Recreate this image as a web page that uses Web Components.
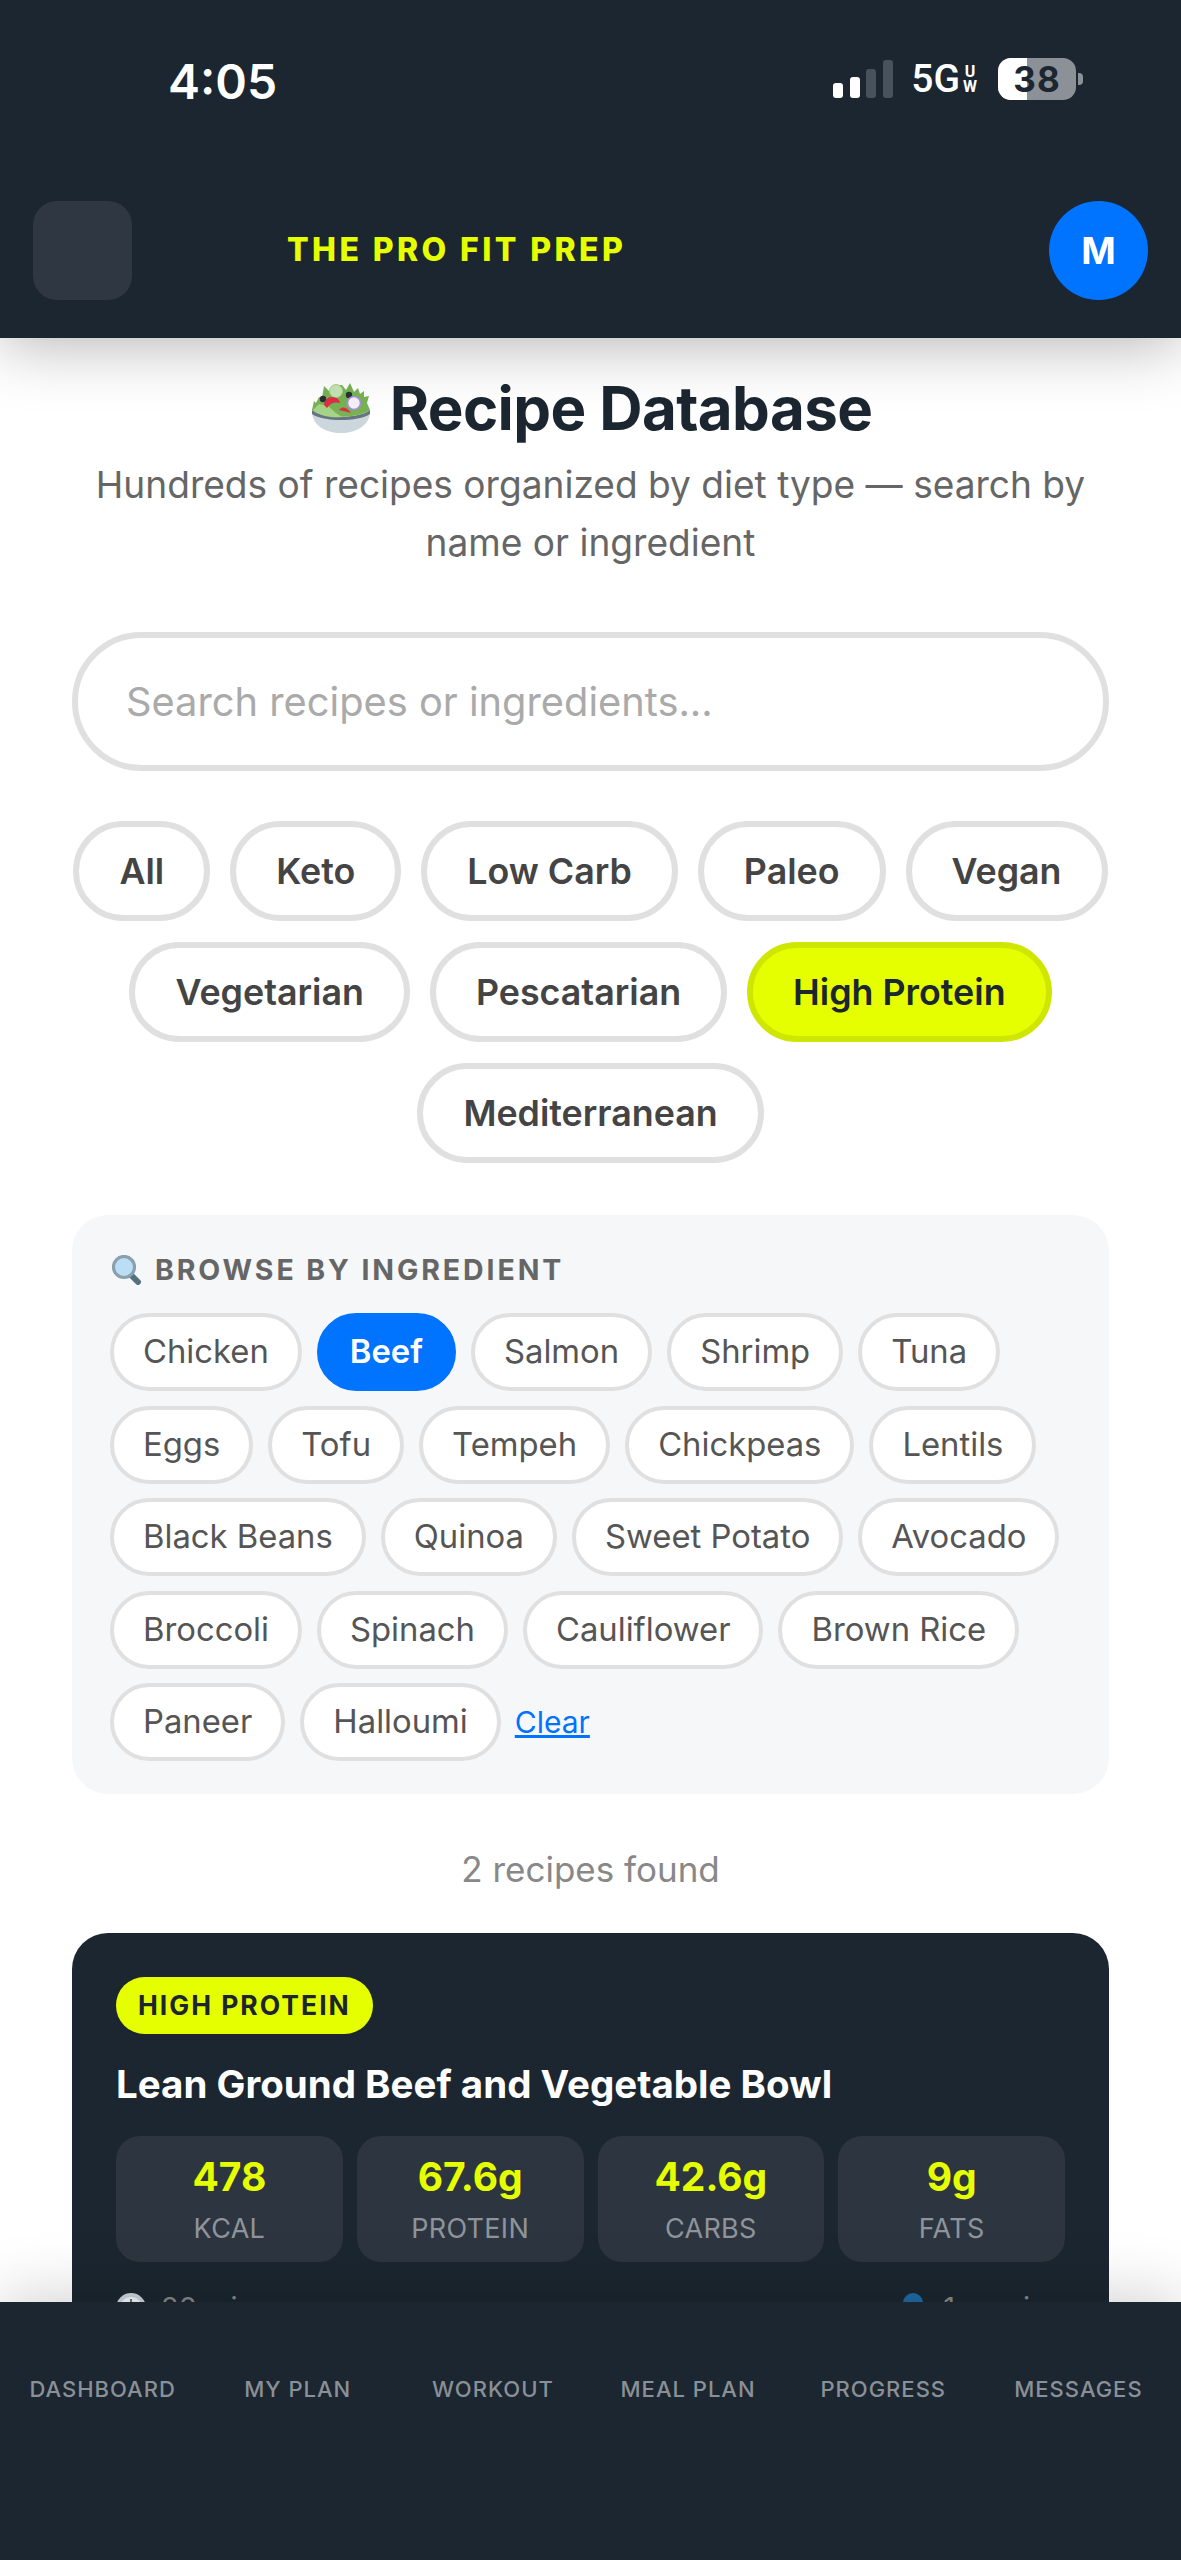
<!DOCTYPE html>
<html lang="en">
<head>
<meta charset="utf-8">
<title>Recipe Database</title>
<style>
    html, body { margin: 0; height: 2560px; overflow: hidden; background: #fff; font-family: Inter, sans-serif; }
</style>
</head>
<body>
<app-shell>
    <status-bar slot="top"></status-bar>
    <top-bar slot="top" initial="M">THE PRO FIT PREP</top-bar>

    <page-title sub="Hundreds of recipes organized by diet type — search by name or ingredient">Recipe Database</page-title>
    <search-box placeholder="Search recipes or ingredients..."></search-box>

    <diet-filters>
        <diet-pill>All</diet-pill>
        <diet-pill>Keto</diet-pill>
        <diet-pill>Low Carb</diet-pill>
        <diet-pill>Paleo</diet-pill>
        <diet-pill>Vegan</diet-pill>
        <diet-pill>Vegetarian</diet-pill>
        <diet-pill>Pescatarian</diet-pill>
        <diet-pill active>High Protein</diet-pill>
        <diet-pill>Mediterranean</diet-pill>
    </diet-filters>

    <ingredient-panel>
        <ingredient-chip>Chicken</ingredient-chip>
        <ingredient-chip active>Beef</ingredient-chip>
        <ingredient-chip>Salmon</ingredient-chip>
        <ingredient-chip>Shrimp</ingredient-chip>
        <ingredient-chip>Tuna</ingredient-chip>
        <ingredient-chip>Eggs</ingredient-chip>
        <ingredient-chip>Tofu</ingredient-chip>
        <ingredient-chip>Tempeh</ingredient-chip>
        <ingredient-chip>Chickpeas</ingredient-chip>
        <ingredient-chip>Lentils</ingredient-chip>
        <ingredient-chip>Black Beans</ingredient-chip>
        <ingredient-chip>Quinoa</ingredient-chip>
        <ingredient-chip>Sweet Potato</ingredient-chip>
        <ingredient-chip>Avocado</ingredient-chip>
        <ingredient-chip>Broccoli</ingredient-chip>
        <ingredient-chip>Spinach</ingredient-chip>
        <ingredient-chip>Cauliflower</ingredient-chip>
        <ingredient-chip>Brown Rice</ingredient-chip>
        <ingredient-chip>Paneer</ingredient-chip>
        <ingredient-chip>Halloumi</ingredient-chip>
    </ingredient-panel>

    <result-count>2 recipes found</result-count>

    <recipe-card tag="HIGH PROTEIN" name="Lean Ground Beef and Vegetable Bowl" time="20 min" serves="1 serving">
        <macro-box value="478">KCAL</macro-box>
        <macro-box value="67.6g">PROTEIN</macro-box>
        <macro-box value="42.6g">CARBS</macro-box>
        <macro-box value="9g">FATS</macro-box>
    </recipe-card>

    <bottom-nav slot="bottom">
        <span>DASHBOARD</span>
        <span>MY PLAN</span>
        <span>WORKOUT</span>
        <span>MEAL PLAN</span>
        <span>PROGRESS</span>
        <span>MESSAGES</span>
    </bottom-nav>
</app-shell>

<script>
// small helper so every element below reads the same way
function define(name, css, html, setup) {
    const template = document.createElement('template');
    template.innerHTML = `<style>${css}</style>${html}`;
    customElements.define(name, class extends HTMLElement {
        constructor() {
            super();
            this.attachShadow({mode: 'open'});
            this.shadowRoot.appendChild(template.content.cloneNode(true));
        }
        connectedCallback() {
            if (setup) setup(this, this.shadowRoot);
        }
    });
}

define('app-shell', `
    :host { display: flex; flex-direction: column; width: 1181px; height: 2560px; overflow: hidden; }
    .top { flex: none; background: #1b2630; box-shadow: 0 6px 60px rgba(0,0,0,.3); position: relative; z-index: 2; }
    .scroll { flex: 1; min-height: 0; overflow: hidden; padding: 0 72px; display: flex; flex-direction: column; }
    .bottom { flex: none; position: relative; z-index: 2; }
`, `
    <div class="top"><slot name="top"></slot></div>
    <div class="scroll"><slot></slot></div>
    <div class="bottom"><slot name="bottom"></slot></div>
`);

define('status-bar', `
    :host { display: flex; align-items: flex-start; justify-content: space-between; height: 201px; box-sizing: border-box; padding: 50px 98px 0 168px; color: #fff; }
    .time { font: 600 48px/64px Inter, sans-serif; }
    .right { display: flex; align-items: center; margin-top: 8px; height: 42px; }
    .net { display: flex; align-items: center; font: 500 39px/42px Roboto, sans-serif; margin: 0 21px 0 18px; }
    .uw { display: flex; flex-direction: column; font: 700 16px/15px Roboto, sans-serif; margin-left: 3px; text-align: center; }
    .batt { position: relative; width: 78px; height: 42px; border-radius: 13px; background: #8c9197; overflow: hidden; color: #1b2630; font: 700 35px/42px Inter, sans-serif; letter-spacing: 1px; text-align: center; }
    .batt i { position: absolute; inset: 0 49px 0 0; background: #fff; }
    .batt span { position: relative; }
    .nub { width: 5px; height: 12px; margin-left: 2px; background: #8c9197; border-radius: 0 4px 4px 0; }
`, `
    <div class="time">4:05</div>
    <div class="right">
        <svg width="60" height="38" viewBox="0 0 60 38">
            <rect x="0" y="23" width="10" height="15" rx="3" fill="#fff"/>
            <rect x="17" y="17" width="10" height="21" rx="3" fill="#fff"/>
            <rect x="33" y="9" width="10" height="29" rx="3" fill="#48525c"/>
            <rect x="50" y="0" width="10" height="38" rx="3" fill="#48525c"/>
        </svg>
        <div class="net">5G<div class="uw"><span>U</span><span>W</span></div></div>
        <div class="batt"><i></i><span>38</span></div>
        <div class="nub"></div>
    </div>
`);

define('top-bar', `
    :host { display: flex; align-items: center; height: 137px; box-sizing: border-box; padding: 0 33px 38px 33px; }
    .menu { width: 99px; height: 99px; border-radius: 24px; background: #2f3842; flex: none; }
    .brand { flex: 1; margin-left: 155px; margin-top: -2px; color: #e6ff00; font: 800 32px/1 Inter, sans-serif; letter-spacing: 3.4px; }
    .avatar { width: 99px; height: 99px; border-radius: 50%; background: #0073ff; color: #fff; font: 700 37px/99px Inter, sans-serif; text-align: center; flex: none; }
`, `
    <div class="menu"></div>
    <div class="brand"><slot></slot></div>
    <div class="avatar"></div>
`, (el, root) => {
    root.querySelector('.avatar').textContent = el.getAttribute('initial');
});

define('page-title', `
    :host { display: block; text-align: center; padding-top: 34px; }
    h1 { display: flex; align-items: center; justify-content: center; gap: 20px; margin: 0; padding-left: 3px; color: #1b2630; font: 700 60px/72px Inter, sans-serif; letter-spacing: -.6px; }
    svg { flex: none; }
    p { margin: 12px 0 0; color: #666; font: 400 37.1px/58px Inter, sans-serif; }
`, `
    <h1>
        <svg width="58" height="50" viewBox="0 0 58 50">
            <path d="M0 30 C12 38 46 38 58 30 C57 42 45 50 29 50 C13 50 1 42 0 30 Z" fill="#ccd6dd"/>
            <path d="M0 27 C10 36 48 36 58 27 L58 31 C46 39 12 39 0 31 Z" fill="#66757f"/>
            <path d="M0 27 L2 18 L4 20 L7 14 L10 15 L12 3 L18 9 L22 2 L30 2 L34 7 L38 0 L42 9 L46 5 L48 11 L52 8 L52 14 L57 13 L55 20 L58 27 C48 36 10 36 0 27 Z" fill="#77b255"/>
            <path d="M1 27 L7 21 L16 23 L24 30 L30 34 C18 35 8 33 1 27 Z" fill="#a6d388"/>
            <circle cx="24" cy="8" r="6.5" fill="#c6e5b3" stroke="#a6d388" stroke-width="1"/>
            <circle cx="11" cy="16" r="3.2" fill="#292f33"/><circle cx="37" cy="12" r="3.2" fill="#292f33"/>
            <path d="M12 22 Q13 14 20 14 Q27 14 28 20 Q20 18 15 25 Z" fill="#dd2e44"/>
            <path d="M27 27 Q32 21 39 30 Q32 28 27 27 Z" fill="#dd2e44"/>
            <circle cx="42" cy="20" r="6.5" fill="#f5f0f8" stroke="#aa8dd8" stroke-width="1.6"/>
        </svg>
        <slot></slot>
    </h1>
    <p></p>
`, (el, root) => {
    root.querySelector('p').textContent = el.getAttribute('sub');
});

define('search-box', `
    :host { display: block; margin-top: 60px; }
    input { display: block; width: 100%; height: 139px; box-sizing: border-box; border: 6px solid #e0e0e0; border-radius: 70px; padding: 0 48px; outline: none; background: #fff; color: #333; font: 400 39.8px Inter, sans-serif; }
    input::placeholder { color: #aaa; opacity: 1; }
`, `<input type="text">`, (el, root) => {
    root.querySelector('input').placeholder = el.getAttribute('placeholder');
});

define('diet-filters', `
    :host { display: flex; flex-wrap: wrap; justify-content: center; gap: 21px 20px; margin-top: 50px; }
`, `<slot></slot>`);

define('diet-pill', `
    :host { display: block; }
    div { height: 100px; box-sizing: border-box; padding: 0 40px; border: 6px solid #e0e0e0; border-radius: 50px; background: #fff; color: #444; font: 600 35.8px/88px Inter, sans-serif; white-space: nowrap; }
    :host([active]) div { background: #e6ff00; border-color: #cfe600; color: #1b2630; }
`, `<div><slot></slot></div>`);

define('ingredient-panel', `
    :host { display: block; margin-top: 52px; padding: 28px 36px 33px 38px; border-radius: 36px; background: #f6f7f9; }
    .head { display: flex; align-items: center; gap: 13px; padding-left: 2px; color: #666; font: 700 28.5px/54px Inter, sans-serif; letter-spacing: 2.9px; margin-bottom: 16px; }
    .chips { display: flex; flex-wrap: wrap; align-items: center; gap: 14.5px 15px; }
    a { color: #0073ff; font: 400 30px Inter, sans-serif; text-decoration: underline; margin-left: -1px; }
`, `
    <div class="head">
        <svg width="30" height="30" viewBox="0 0 30 30">
            <path d="M18 19 L26 27" stroke="#547182" stroke-width="6" stroke-linecap="round"/>
            <circle cx="12" cy="12" r="10.5" fill="#bbddf5" stroke="#8aa0ad" stroke-width="3.2"/>
        </svg>
        BROWSE BY INGREDIENT
    </div>
    <div class="chips"><slot></slot><a href="#">Clear</a></div>
`);

define('ingredient-chip', `
    :host { display: block; }
    div { height: 78px; box-sizing: border-box; padding: 0 29px; border: 4.5px solid #e0e0e0; border-radius: 39px; background: #fff; color: #555; font: 400 32.8px/69px Inter, sans-serif; white-space: nowrap; }
    :host([active]) div { background: #0073ff; border-color: #0073ff; color: #fff; font-weight: 600; }
`, `<div><slot></slot></div>`);

define('result-count', `
    :host { display: block; margin: 52px 0 41px; text-align: center; color: #888; font: 400 35px/46px Inter, sans-serif; }
`, `<slot></slot>`);

define('recipe-card', `
    :host { display: block; flex: none; padding: 44px 44px 60px; border-radius: 36px; background: #1b2630; }
    .tag { display: inline-block; padding: 0 22px; border-radius: 29px; background: #e6ff00; color: #1b2630; font: 700 26.5px/57px Inter, sans-serif; letter-spacing: 2px; vertical-align: top; }
    h3 { margin: 25px 0 0; color: #fff; font: 700 38.5px/50px Inter, sans-serif; }
    .macros { display: grid; grid-template-columns: repeat(4, 1fr); gap: 14px; margin-top: 27px; }
    .meta { display: flex; justify-content: space-between; margin-top: 26px; color: #888; font: 400 29px/40px Inter, sans-serif; }
    .meta span { display: flex; align-items: center; gap: 15px; }
    .meta b { font-weight: 400; }
`, `
    <div class="tag"></div>
    <h3></h3>
    <div class="macros"><slot></slot></div>
    <div class="meta">
        <span>
            <svg width="30" height="30" viewBox="0 0 30 30"><circle cx="15" cy="15" r="15" fill="#ccd6dd"/><circle cx="15" cy="15" r="11" fill="#f5f8fa"/><path d="M15 6V15" stroke="#66757f" stroke-width="2"/></svg>
            <b class="t"></b>
        </span>
        <span>
            <svg width="30" height="30" viewBox="0 0 30 30"><circle cx="15" cy="10" r="10" fill="#1f6aa5"/><path d="M1 30 C3 16 27 16 29 30 Z" fill="#1f6aa5"/></svg>
            <b class="s"></b>
        </span>
    </div>
`, (el, root) => {
    root.querySelector('.tag').textContent = el.getAttribute('tag');
    root.querySelector('h3').textContent = el.getAttribute('name');
    root.querySelector('.t').textContent = el.getAttribute('time');
    root.querySelector('.s').textContent = el.getAttribute('serves');
});

define('macro-box', `
    :host { display: block; height: 126px; box-sizing: border-box; padding-top: 17px; border-radius: 24px; background: #2d3640; text-align: center; }
    .v { color: #e6ff00; font: 700 39px/47px Inter, sans-serif; }
    .l { margin-top: 11px; color: #8f949a; font: 400 27px/36px Inter, sans-serif; letter-spacing: .3px; }
`, `
    <div class="v"></div>
    <div class="l"><slot></slot></div>
`, (el, root) => {
    root.querySelector('.v').textContent = el.getAttribute('value');
});

define('bottom-nav', `
    :host { display: grid; grid-template-columns: repeat(6, 1fr); height: 258px; box-sizing: border-box; padding: 69px 5px 0; background: #1b2630; box-shadow: 0 -6px 60px rgba(0,0,0,.18); color: #8a9097; font: 500 22px/36px Inter, sans-serif; letter-spacing: 1px; text-align: center; }
`, `<slot></slot>`);
</script>
</body>
</html>
